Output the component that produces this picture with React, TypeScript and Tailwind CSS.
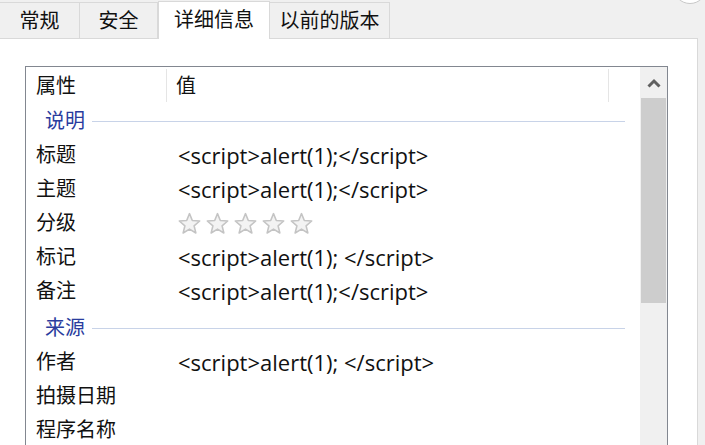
import React from 'react';

const font = { fontFamily: '"Open Sans", "Noto Sans CJK SC", sans-serif' };

const tabs = [
  { label: '常规', w: 'w-[80px]' },
  { label: '安全', w: 'w-[78px]' },
  { label: '详细信息', w: 'w-[112px]', active: true },
  { label: '以前的版本', w: 'w-[120px]' },
];

type Row = { group?: string; name?: string; value?: string; stars?: boolean; gap?: boolean };

const rows: Row[] = [
  { group: '说明' },
  { name: '标题', value: '<script>alert(1);</script>' },
  { name: '主题', value: '<script>alert(1);</script>' },
  { name: '分级', stars: true },
  { name: '标记', value: '<script>alert(1); </script>' },
  { name: '备注', value: '<script>alert(1);</script>' },
  { group: '来源', gap: true },
  { name: '作者', value: '<script>alert(1); </script>' },
  { name: '拍摄日期' },
  { name: '程序名称' },
];

function Star() {
  return (
    <svg width="25" height="25" viewBox="0 0 24 24" className="shrink-0">
      <path
        d="M12 2.5l2.7 6.6 7.1.5-5.4 4.6 1.7 6.9L12 17.4l-6.1 3.7 1.7-6.9-5.4-4.6 7.1-.5z"
        fill="#f3f3f3"
        stroke="#c4c4c4"
        strokeWidth="1.5"
        strokeLinejoin="round"
      />
    </svg>
  );
}

export default function App() {
  return (
    <div className="w-[705px] h-[445px] bg-[#f0f0f0] overflow-hidden relative text-[20px] text-[#111]" style={font}>
      <div className="absolute left-[673px] -top-[30px] w-[34px] h-[34px] rounded-full bg-white border border-[#c8c8c8]" />

      <div className="flex items-end h-[38px]">
        {tabs.map((t) =>
          t.active ? (
            <div
              key={t.label}
              className={`${t.w} h-[38px] bg-white border-x border-t border-[#d9d9d9] flex items-start justify-center pt-[3px] -mb-px relative z-10`}
            >
              {t.label}
            </div>
          ) : (
            <div
              key={t.label}
              className={`${t.w} h-[36px] bg-[#f0f0f0] border-t border-r border-[#d9d9d9] flex items-center justify-center pt-[1px]`}
            >
              {t.label}
            </div>
          )
        )}
      </div>

      <div className="w-[698px] h-[420px] bg-white border-t border-r border-[#d9d9d9] pt-[27px] pl-[25px]">
        <div className="w-[643px] h-[400px] border border-[#828790] flex">
          <div className="flex-1 flex flex-col">
            <div className="h-[37px] flex items-stretch shrink-0">
              <div className="w-[141px] flex items-center pl-[10px] border-r border-[#e5e5e5] my-[2px]">属性</div>
              <div className="w-[442px] flex items-center pl-[9px] border-r border-[#e5e5e5] my-[2px]">值</div>
            </div>
            {rows.map((r, i) =>
              r.group ? (
                <div key={i} className={`h-[34px] flex items-center shrink-0 ${r.gap ? 'mt-[3px]' : ''}`}>
                  <span className="pl-[19px] pr-[7px] text-[#2a3c9e]">{r.group}</span>
                  <div className="h-px w-[533px] bg-[#c8d3e8]" />
                </div>
              ) : (
                <div key={i} className="h-[34px] flex items-center shrink-0">
                  <div className="w-[141px] pl-[10px]">{r.name}</div>
                  <div className="pl-[11px] flex items-center text-[22px]">
                    {r.stars ? (
                      <div className="flex gap-[3px] -ml-[1px]">
                        <Star />
                        <Star />
                        <Star />
                        <Star />
                        <Star />
                      </div>
                    ) : (
                      r.value
                    )}
                  </div>
                </div>
              )
            )}
          </div>
          <div className="w-[27px] bg-[#f0f0f0] flex flex-col shrink-0">
            <div className="h-[31px] flex items-center justify-center">
              <svg width="14" height="10" viewBox="0 0 14 10">
                <path d="M1.5 8.5L7 3l5.5 5.5" fill="none" stroke="#606060" strokeWidth="3" />
              </svg>
            </div>
            <div className="h-[205px] bg-[#cdcdcd] mx-px" />
          </div>
        </div>
      </div>
    </div>
  );
}
